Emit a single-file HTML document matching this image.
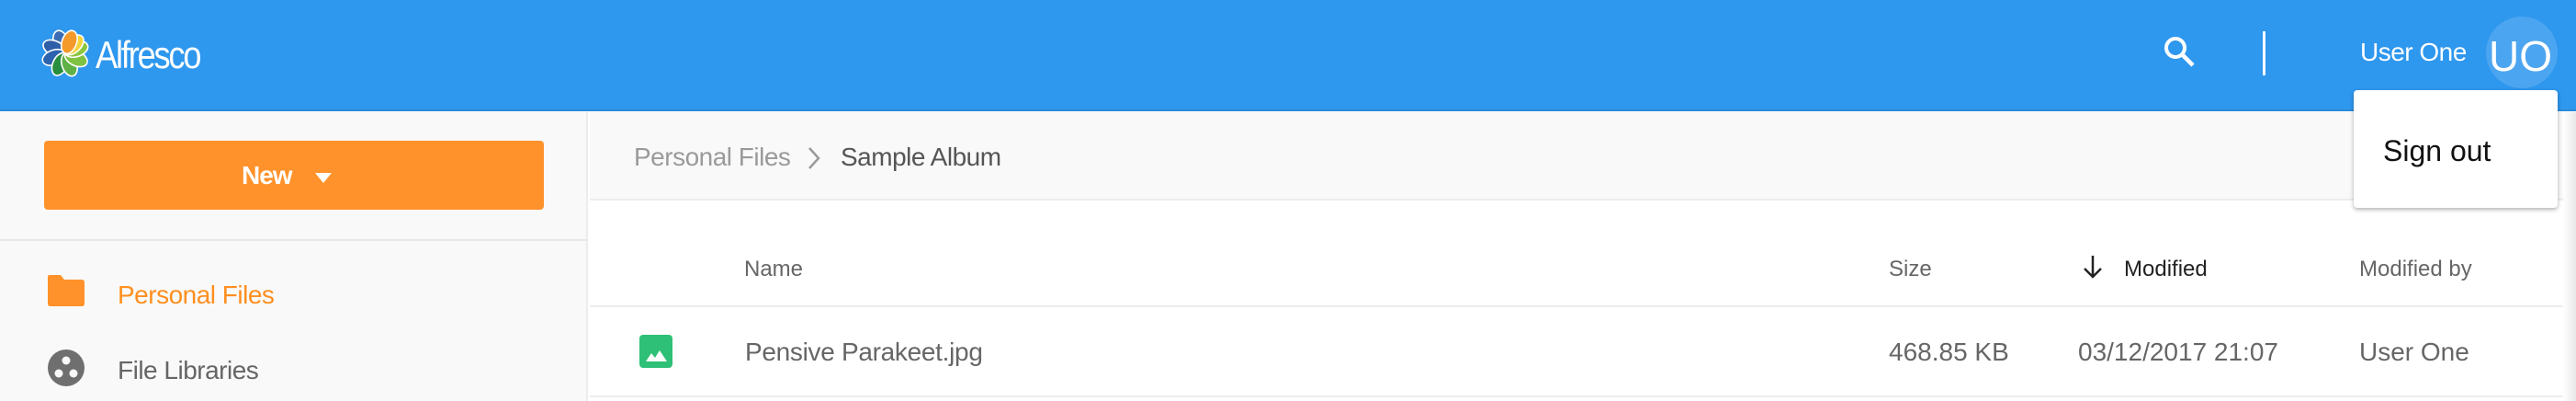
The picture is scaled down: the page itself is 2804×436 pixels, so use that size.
<!DOCTYPE html>
<html><head><meta charset="utf-8"><style>
*{margin:0;padding:0;box-sizing:border-box}
body{width:2804px;height:436px;overflow:hidden;background:#fff;font-family:"Liberation Sans",sans-serif;position:relative}
.a{position:absolute;white-space:nowrap}
</style></head><body>
<div class="a" style="left:0;top:0;width:2804px;height:121px;background:#2e97ee;border-bottom:2px solid #2a8ad9"></div>
<svg class="a" style="left:44px;top:30px" width="54" height="56" viewBox="-27 -28 54 56">
<g stroke="#fff" stroke-width="1.6">
<ellipse cx="0" cy="-13" rx="8" ry="13" fill="#3a6db5" transform="rotate(-20)"/>
<ellipse cx="0" cy="-13" rx="8" ry="13" fill="#2f5ea8" transform="rotate(-65)"/>
<ellipse cx="0" cy="-13" rx="8" ry="13" fill="#2c63ae" transform="rotate(-110)"/>
<ellipse cx="0" cy="-13" rx="8" ry="13" fill="#2a8e3f" transform="rotate(-155)"/>
<ellipse cx="0" cy="-13" rx="8" ry="13" fill="#5fb045" transform="rotate(160)"/>
<ellipse cx="0" cy="-13" rx="8" ry="13" fill="#7fc241" transform="rotate(115)"/>
<ellipse cx="0" cy="-13" rx="8" ry="13" fill="#8cc63f" transform="rotate(70)"/>
<ellipse cx="0" cy="-13" rx="8" ry="13" fill="#f5d33a" transform="rotate(45)"/>
<ellipse cx="0" cy="-13" rx="8" ry="13" fill="#f39a2b" transform="rotate(20)"/>
</g></svg>
<div class="a" style="left:104px;top:36px;font-size:42px;color:#fff;letter-spacing:-2.5px;transform:scaleX(.86);transform-origin:left">Alfresco</div>
<svg class="a" style="left:2354px;top:38px" width="36" height="36" viewBox="0 0 36 36"><circle cx="14" cy="14" r="10" fill="none" stroke="#fff" stroke-width="4"/><path d="M21 21L33 33" stroke="#fff" stroke-width="4.5"/></svg>
<div class="a" style="left:2463px;top:34px;width:3px;height:48px;background:#fff"></div>
<div class="a" style="left:2569px;top:41px;font-size:28px;color:#fff;letter-spacing:-.5px">User One</div>
<div class="a" style="left:2706px;top:18px;width:78px;height:78px;border-radius:50%;background:#4ca5f0"></div>
<div class="a" style="left:2709px;top:34px;font-size:46px;color:#fff">UO</div>
<div class="a" style="left:0;top:122px;width:640px;height:314px;background:#f9f9f9;border-right:2px solid #ececec"></div>
<div class="a" style="left:48px;top:153px;width:544px;height:75px;background:#ff922b;border-radius:4px"></div>
<div class="a" style="left:263px;top:175px;font-size:28px;color:#fff;font-weight:bold;letter-spacing:-1px">New</div>
<div class="a" style="left:343px;top:188px;width:0;height:0;border-left:9px solid transparent;border-right:9px solid transparent;border-top:11px solid #fff"></div>
<div class="a" style="left:0;top:260px;width:640px;height:2px;background:#e8e8e8"></div>
<svg class="a" style="left:52px;top:299px" width="40" height="34" viewBox="0 0 40 34"><path d="M2 0H14L18 5H37Q40 5 40 8V31Q40 34 37 34H3Q0 34 0 31V2Q0 0 2 0Z" fill="#ff922b"/></svg>
<div class="a" style="left:128px;top:305px;font-size:28px;color:#ff8f1f;letter-spacing:-.5px">Personal Files</div>
<svg class="a" style="left:52px;top:380px" width="40" height="40" viewBox="0 0 40 40"><circle cx="20" cy="20" r="20" fill="#6f6f6f"/><circle cx="20" cy="12" r="4.5" fill="#f9f9f9"/><circle cx="12" cy="26" r="4.5" fill="#f9f9f9"/><circle cx="28" cy="26" r="4.5" fill="#f9f9f9"/></svg>
<div class="a" style="left:128px;top:387px;font-size:28px;color:#666;letter-spacing:-.5px">File Libraries</div>
<div class="a" style="left:642px;top:122px;width:2162px;height:96px;background:#f9f9f9;border-bottom:2px solid #ececec"></div>
<div class="a" style="left:690px;top:155px;font-size:28px;color:#9a9a9a;letter-spacing:-.5px">Personal Files</div>
<svg class="a" style="left:878px;top:159px" width="16" height="26" viewBox="0 0 16 26"><path d="M3 2L13 13L3 24" fill="none" stroke="#999" stroke-width="2.5"/></svg>
<div class="a" style="left:915px;top:155px;font-size:28px;color:#555;letter-spacing:-.5px">Sample Album</div>
<div class="a" style="left:810px;top:279px;font-size:24px;color:#666">Name</div>
<div class="a" style="left:2056px;top:279px;font-size:24px;color:#666">Size</div>
<svg class="a" style="left:2266px;top:276px" width="24" height="28" viewBox="0 0 24 28"><path d="M12 2V25M3 16L12 25L21 16" fill="none" stroke="#222" stroke-width="2.5"/></svg>
<div class="a" style="left:2312px;top:279px;font-size:24px;color:#222">Modified</div>
<div class="a" style="left:2568px;top:279px;font-size:24px;color:#666">Modified by</div>
<div class="a" style="left:642px;top:332px;width:2162px;height:2px;background:#ececec"></div>
<svg class="a" style="left:696px;top:364px" width="36" height="36" viewBox="0 0 36 36"><rect width="36" height="36" rx="4" fill="#2ec076"/><path d="M7 29L13 20L17 25L22 17L30 29Z" fill="#fff"/></svg>
<div class="a" style="left:811px;top:367px;font-size:28px;color:#666;letter-spacing:-.3px">Pensive Parakeet.jpg</div>
<div class="a" style="left:2056px;top:367px;font-size:28px;color:#666">468.85 KB</div>
<div class="a" style="left:2262px;top:367px;font-size:28px;color:#666">03/12/2017 21:07</div>
<div class="a" style="left:2568px;top:367px;font-size:28px;color:#666">User One</div>
<div class="a" style="left:642px;top:430px;width:2162px;height:2px;background:#ececec"></div>
<div class="a" style="left:2790px;top:122px;width:14px;height:314px;background:linear-gradient(90deg,#fff,#e8e8e8)"></div>
<div class="a" style="left:2562px;top:98px;width:222px;height:128px;background:#fff;border-radius:4px;box-shadow:0 2px 5px rgba(0,0,0,.3)"></div>
<div class="a" style="left:2594px;top:146px;font-size:32px;color:#111">Sign out</div>
</body></html>
